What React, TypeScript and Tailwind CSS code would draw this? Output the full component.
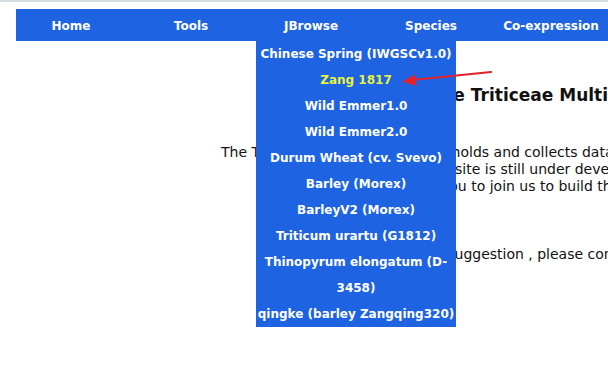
const navItems = ['Home', 'Tools', 'JBrowse', 'Species', 'Co-expression'];

const genomes = [
  'Chinese Spring (IWGSCv1.0)',
  'Zang 1817',
  'Wild Emmer1.0',
  'Wild Emmer2.0',
  'Durum Wheat (cv. Svevo)',
  'Barley (Morex)',
  'BarleyV2 (Morex)',
  'Triticum urartu (G1812)',
  'Thinopyrum elongatum (D-3458)',
  'qingke (barley Zangqing320)',
];

function Arrow() {
  return (
    <svg className="absolute left-[398px] top-[66px] z-20" width="98" height="22" viewBox="0 0 98 22">
      <line x1="93" y1="6" x2="14" y2="14" stroke="#e2222b" strokeWidth="2.2" strokeLinecap="round" />
      <polygon points="4,15.5 17,8.5 18.5,20" fill="#e2222b" />
    </svg>
  );
}

export default function App() {
  return (
    <div className="relative w-[608px] h-[371px] overflow-hidden bg-white text-[#111] font-['DejaVu_Sans',sans-serif]">
      {/* top rule */}
      <div className="h-[2px] bg-[#d7dce1]" />

      {/* Nav bar */}
      <nav className="mt-[7px] ml-4 h-8 bg-[#1e63e1]">
        <ul className="-ml-[5px] flex h-full items-center pt-[1px]">
          {navItems.map((item) => (
            <li key={item} className="w-[120px] shrink-0 text-center text-[12px] font-bold text-white whitespace-nowrap">
              {item}
            </li>
          ))}
        </ul>
      </nav>

      {/* Page body */}
      <div className="whitespace-nowrap">
        <h2 className="mt-[44px] pl-[315px] text-[17px] font-bold leading-[21px]">
          Welcome to the Triticeae Multi-omics Center
        </h2>
        <div className="mt-[38px] text-[14px] leading-[17px]">
          <p className="pl-[221px]">The Triticeae Multi-omics Center holds and collects data from wheat and its relatives.</p>
          <p className="pl-[393px]">This website is still under development, and we sincerely</p>
          <p className="pl-[348px]">We welcome you to join us to build the database together.</p>
        </div>
        <p className="mt-[51px] pl-[307px] text-[14px] leading-[17px]">
          For any question or suggestion , please contact us.
        </p>
      </div>

      {/* JBrowse dropdown */}
      <ul className="absolute left-[256px] top-[41px] z-10 w-[200px] bg-[#1e63e1] text-center text-[12px] font-bold leading-[26px] text-white">
        {genomes.map((g) => (
          <li key={g} className={g === 'Zang 1817' ? 'text-[#e6f23c]' : ''}>
            {g === 'Thinopyrum elongatum (D-3458)' ? (
              <>
                Thinopyrum elongatum (D-
                <br />
                3458)
              </>
            ) : (
              <span className="whitespace-nowrap">{g}</span>
            )}
          </li>
        ))}
      </ul>

      <Arrow />
    </div>
  );
}
